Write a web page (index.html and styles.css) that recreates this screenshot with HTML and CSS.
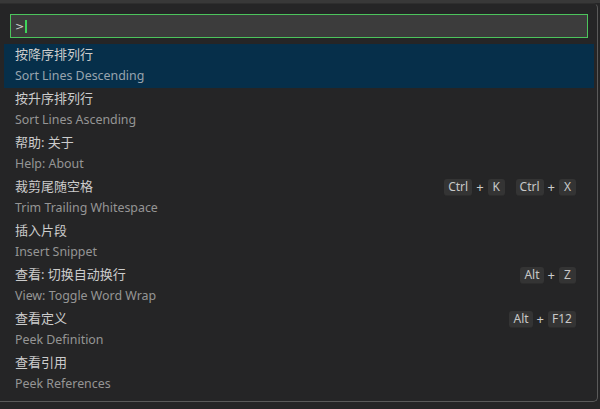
FILE: index.html
```html
<!DOCTYPE html>
<html lang="zh">
<head>
<meta charset="utf-8">
<link rel="stylesheet" href="styles.css">
</head>
<body>
<div class="topstrip"></div>
<div class="panel">
  <div class="input-wrap">
    <div class="input"><span class="prompt">&gt;</span><span class="caret"></span></div>
  </div>
  <ul class="list">
    <li class="item selected">
      <div class="line"><span class="label">按降序排列行</span></div>
      <div class="desc">Sort Lines Descending</div>
    </li>
    <li class="item">
      <div class="line"><span class="label">按升序排列行</span></div>
      <div class="desc">Sort Lines Ascending</div>
    </li>
    <li class="item">
      <div class="line"><span class="label">帮助: 关于</span></div>
      <div class="desc">Help: About</div>
    </li>
    <li class="item">
      <div class="line"><span class="label">裁剪尾随空格</span>
        <span class="keys"><kbd>Ctrl</kbd><span class="plus">+</span><kbd>K</kbd><span class="chord"></span><kbd>Ctrl</kbd><span class="plus">+</span><kbd>X</kbd></span></div>
      <div class="desc">Trim Trailing Whitespace</div>
    </li>
    <li class="item">
      <div class="line"><span class="label">插入片段</span></div>
      <div class="desc">Insert Snippet</div>
    </li>
    <li class="item">
      <div class="line"><span class="label">查看: 切换自动换行</span>
        <span class="keys"><kbd>Alt</kbd><span class="plus">+</span><kbd>Z</kbd></span></div>
      <div class="desc">View: Toggle Word Wrap</div>
    </li>
    <li class="item">
      <div class="line"><span class="label">查看定义</span>
        <span class="keys"><kbd>Alt</kbd><span class="plus">+</span><kbd>F12</kbd></span></div>
      <div class="desc">Peek Definition</div>
    </li>
    <li class="item">
      <div class="line"><span class="label">查看引用</span></div>
      <div class="desc">Peek References</div>
    </li>
  </ul>
</div>
</body>
</html>
```

FILE: styles.css
```css
html, body {
  margin: 0;
  padding: 0;
}
body {
  width: 600px;
  height: 409px;
  background: #252526;
  overflow: hidden;
  font-family: "Noto Sans", "Noto Sans CJK SC", sans-serif;
  font-size: 13px;
  -webkit-font-smoothing: none;
}
.topstrip {
  height: 3px;
  background: #383838;
}
.panel {
  width: 597px;
  height: 397px;
  background: #252526;
  border-top: 1px solid #2e2e2e;
  border-right: 1px solid #5a5a5a;
  border-bottom: 1px solid #5a5a5a;
  border-radius: 0 5px 5px 0;
  box-sizing: content-box;
}
.input-wrap {
  padding: 10px 9px 0 10px;
}
.input {
  height: 22px;
  border: 1px solid #4cc45c;
  background: #3c3c3c;
  display: flex;
  align-items: center;
  padding-left: 4px;
  color: #cccccc;
}
.prompt {
  font-family: "DejaVu Sans", sans-serif;
  font-size: 11px;
  line-height: 1;
}
.caret {
  width: 2px;
  height: 13px;
  background: #3ed45a;
  margin-left: 1px;
}
.list {
  list-style: none;
  margin: 6px 0 0 4px;
  padding: 0;
  width: 590px;
}
.item {
  height: 44px;
  padding: 0 18px 0 11px;
  box-sizing: border-box;
}
.item.selected {
  background: #062f4a;
}
.line {
  height: 21px;
  display: flex;
  align-items: center;
  justify-content: space-between;
  color: #cccccc;
}
.label {
  line-height: 21px;
}
.desc {
  height: 23px;
  line-height: 22px;
  font-size: 12.4px;
  color: #959595;
}
.selected .desc {
  color: #98a4ae;
}
.keys {
  display: flex;
  align-items: center;
  margin-top: 1px;
}
kbd {
  font-family: "Noto Sans", sans-serif;
  font-size: 12px;
  color: #c8c8c8;
  background: #343434;
  border-radius: 3px;
  border-bottom: 1px solid #2c2c2c;
  height: 17px;
  line-height: 16px;
  padding: 0 4px;
  box-sizing: border-box;
  min-width: 17px;
  text-align: center;
}
.plus {
  color: #cccccc;
  margin: 0 4px;
  font-size: 13px;
}
.chord {
  width: 11px;
}
```
